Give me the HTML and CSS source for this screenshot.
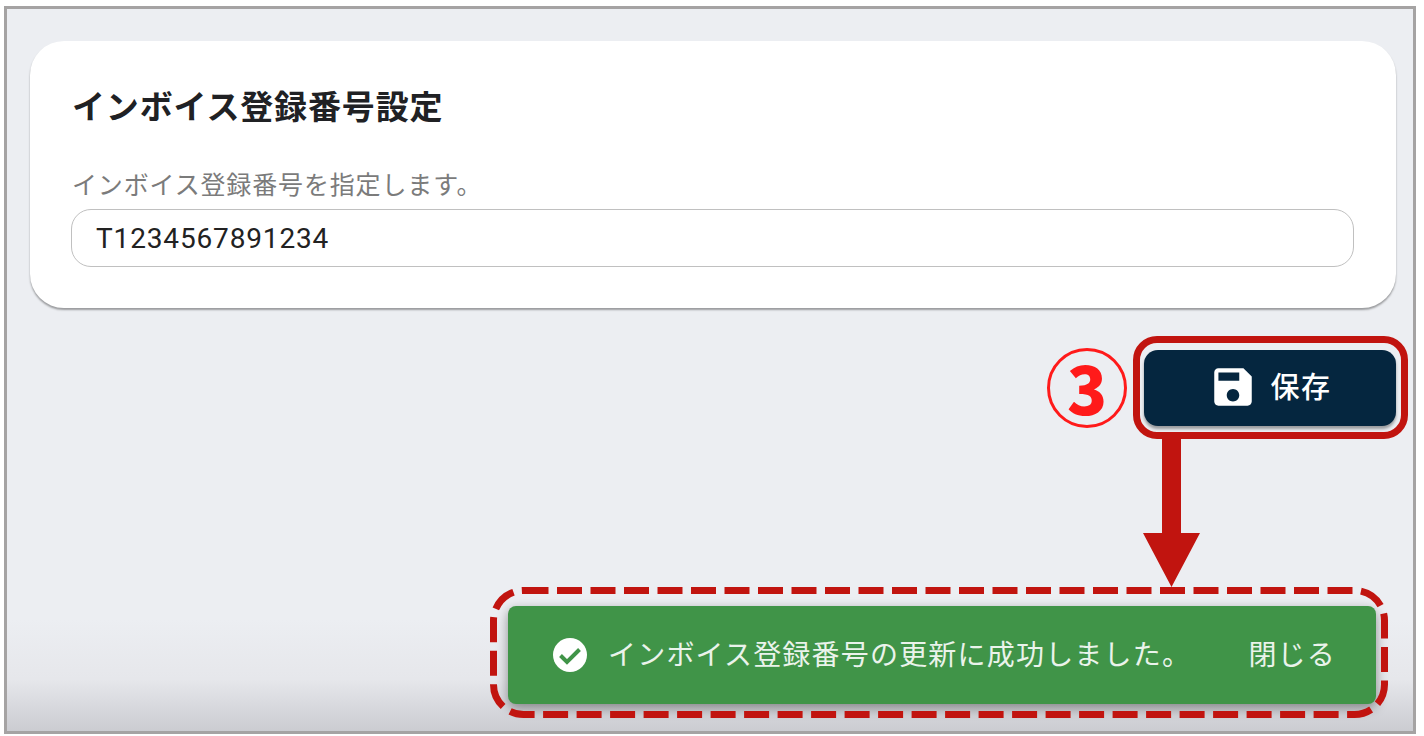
FILE: index.html
```html
<!DOCTYPE html>
<html lang="ja">
<head>
  <meta charset="UTF-8">
  <meta name="viewport" content="width=device-width, initial-scale=1.0">
  <title>インボイス登録番号設定</title>
  <link rel="stylesheet" href="styles.css">
</head>
<body>
  <div class="frame">
    <section class="card">
      <h1 class="card-title">インボイス登録番号設定</h1>
      <label class="field-label" for="invoice-number">インボイス登録番号を指定します。</label>
      <input class="field-input" id="invoice-number" type="text" value="T1234567891234">
    </section>

    <div class="actions">
      <div class="step-mark"><span>3</span></div>
      <div class="save-outline">
        <button class="save-button" type="button">
          <svg class="save-icon" viewBox="0 0 24 24" fill="#fff"><path d="M17 3H5c-1.11 0-2 .9-2 2v14c0 1.1.89 2 2 2h14c1.1 0 2-.9 2-2V7l-4-4zm-5 16c-1.66 0-3-1.34-3-3s1.34-3 3-3 3 1.34 3 3-1.34 3-3 3zm3-10H5V5h10v4z"/></svg>
          <span class="save-label">保存</span>
        </button>
      </div>
    </div>

    <div class="toast">
      <svg class="toast-icon" viewBox="0 0 34 34">
        <circle cx="17" cy="17" r="17" fill="#fff"/>
        <path d="M7.500 17.500l6.500 6.500L26.500 11.500" fill="none" stroke="#409448" stroke-width="4"/>
      </svg>
      <span class="toast-text">インボイス登録番号の更新に成功しました。</span>
      <span class="toast-close">閉じる</span>
    </div>

    <!-- annotations drawn over the screen capture -->
    <svg class="arrow" viewBox="0 0 57 149">
      <path d="M19 0h19v95h19L28.500 149 0 95h19z" fill="#c1140f"/>
    </svg>
    <svg class="dash-box" viewBox="0 0 898 131">
      <rect x="3.500" y="3.500" width="891" height="124" rx="30" fill="none" stroke="#c1140f" stroke-width="7" stroke-dasharray="25 8.500"/>
    </svg>
  </div>
</body>
</html>
```

FILE: styles.css
```css
* {
  box-sizing: border-box;
}

html, body {
  height: 100%;
}

body {
  margin: 0;
  padding: 6px 8px 2px 4px;
  background-color: #fff;
  font-family: Roboto, "Noto Sans CJK JP", sans-serif;
  overflow: hidden;
}

.frame {
  position: relative;
  height: 728px;
  display: flex;
  flex-direction: column;
  padding: 32px 17px 27px 23px;
  border: 3px solid #a5a3a3;
  background: linear-gradient(to bottom, #eceef2 0, #eceef2 610px, #e6e7eb 670px, #c9cacf 726px);
}

.card {
  height: 267px;
  padding: 47px 42px 0 41px;
  background-color: #fff;
  border-radius: 34px;
  box-shadow: 0 2px 2px rgba(0, 0, 0, 0.35);
}

.card-title {
  margin: 0 0 41px 1px;
  font-size: 33px;
  line-height: 40px;
  font-weight: 700;
  letter-spacing: 0.850px;
  color: #202124;
}

.field-label {
  display: block;
  margin-left: 1px;
  font-size: 25px;
  line-height: 34px;
  letter-spacing: 0.850px;
  color: #7b7b7b;
}

.field-input {
  display: block;
  width: 100%;
  height: 58px;
  margin-top: 6px;
  padding: 0 24px 0 24px;
  border: 1.5px solid #c0c0c0;
  border-radius: 20px;
  font-family: inherit;
  font-size: 28px;
  letter-spacing: 0.850px;
  color: #222;
  background-color: #fff;
}

.actions {
  display: flex;
  justify-content: flex-end;
  align-items: center;
  gap: 6px;
  margin-top: 28px;
  margin-right: -12px;
}

.step-mark {
  width: 80px;
  height: 80px;
  display: flex;
  align-items: center;
  justify-content: center;
  padding-bottom: 3px;
  border: 3px solid #ff1a1a;
  border-radius: 50%;
  font-size: 66px;
  font-weight: 900;
  font-family: "Noto Sans CJK JP", sans-serif;
  color: #ff1a1a;
}

.step-mark span {
  line-height: 1;
}

.save-outline {
  padding: 7px 5px 6px 4px;
  border: 7px solid #c1140f;
  border-radius: 24px;
}

.save-button {
  width: 252px;
  height: 76px;
  display: flex;
  align-items: center;
  justify-content: center;
  gap: 12px;
  padding: 0 0 3px;
  border: 0;
  border-radius: 14px;
  background-color: #05263f;
  box-shadow: 0 3px 3px rgba(0, 0, 0, 0.35);
  color: #fff;
  font-family: inherit;
  font-size: 29px;
  font-weight: 500;
  letter-spacing: 1.500px;
}

.save-label {
  padding-bottom: 4px;
}

.save-icon {
  width: 50px;
  height: 50px;
}

.toast {
  height: 98px;
  margin-top: auto;
  margin-left: 478px;
  margin-right: 20px;
  display: flex;
  align-items: center;
  padding: 0 40px 0 45px;
  border-radius: 8px;
  background-color: #409448;
  box-shadow: 0 4px 12px rgba(0, 0, 0, 0.4);
  color: #eaf3eb;
  font-size: 28px;
  letter-spacing: 1.200px;
}

.toast-icon {
  width: 34px;
  height: 34px;
  margin-right: 21px;
  flex-shrink: 0;
}

.toast-text {
  flex: 1;
  padding-bottom: 4px;
}

.toast-close {
  padding-bottom: 4px;
}

.arrow {
  position: absolute;
  left: 1136px;
  top: 429px;
  width: 57px;
  height: 149px;
}

.dash-box {
  position: absolute;
  left: 483px;
  top: 578px;
  width: 898px;
  height: 131px;
}
```
